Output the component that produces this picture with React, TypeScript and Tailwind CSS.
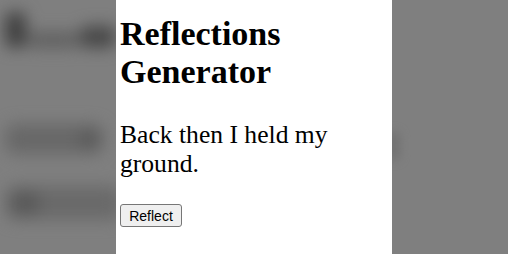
import React from "react";

export default function App() {
  return (
    <div className="flex h-[254px] w-[508px] overflow-hidden bg-[#7f7f7f]">
      <div className="h-full w-[116px] shrink-0 overflow-hidden bg-[#7f7f7f]">
        <div className="flex flex-col pl-[5px] pt-[12px] blur-[8px]">
          <div className="flex items-end">
            <div className="h-[36px] w-[24px] rounded-[8px] bg-[#404040]" />
            <div className="h-[16px] w-[60px] rounded-[8px] bg-[#606060]" />
            <div className="h-[22px] w-[40px] rounded-[8px] bg-[#484848]" />
          </div>
          <div className="mt-[76px] flex h-[30px] w-[98px] items-center justify-end rounded-[10px] bg-[#686868] pr-[2px]">
            <div className="h-[20px] w-[22px] rounded-[8px] bg-[#5c5c5c]" />
          </div>
          <div className="mt-[32px] flex h-[34px] w-[116px] items-center rounded-[10px] bg-[#6a6a6a] pl-[6px]">
            <div className="h-[24px] w-[28px] rounded-[8px] bg-[#5a5a5a]" />
          </div>
        </div>
      </div>
      <div className="h-full w-[276px] shrink-0 bg-white pl-[4px] pt-[15px] text-black">
        <h1 className="m-0 text-[34px] font-bold leading-[38px] [font-family:'Liberation_Serif',serif]">
          Reflections Generator
        </h1>
        <p className="mt-[30px] text-[25.6px] leading-[28.5px] [font-family:'Liberation_Serif',serif]">
          Back then I held my ground.
        </p>
        <button className="mt-[26px] h-[23px] w-[62px] rounded-[3px] border border-[#767676] bg-[#efefef] text-[14px] leading-none text-black [font-family:'Liberation_Sans',Arial,sans-serif]">
          Reflect
        </button>
      </div>
      <div className="h-full flex-1 overflow-hidden bg-[#7f7f7f]">
        <div className="ml-[-6px] mt-[132px] h-[28px] w-[14px] rounded-[6px] bg-[#727272] blur-[5px]" />
      </div>
    </div>
  );
}
